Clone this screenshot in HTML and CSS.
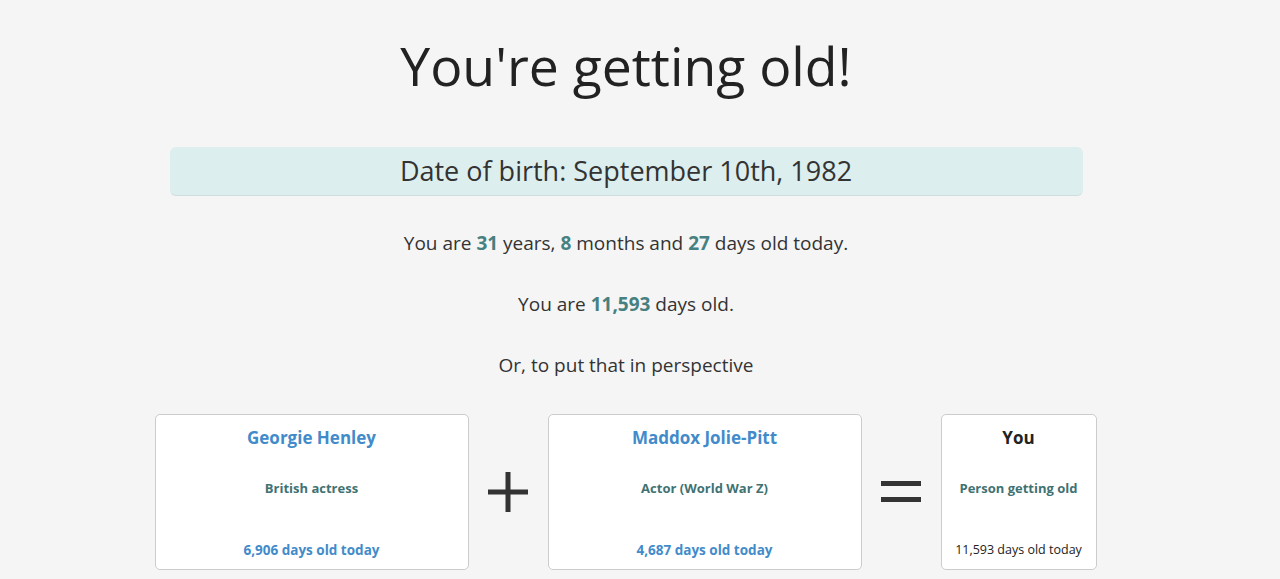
FILE: index.html
```html
<!DOCTYPE html>
<html>
<head>
<meta charset="utf-8">
<link rel="stylesheet" href="styles.css">
</head>
<body>
<div class="page">
  <h1 class="title">You're getting old!</h1>
  <div class="dob">Date of birth: September 10th, 1982</div>
  <p class="line">You are <b class="num">31</b> years, <b class="num">8</b> months and <b class="num">27</b> days old today.</p>
  <p class="line">You are <b class="num">11,593</b> days old.</p>
  <p class="line">Or, to put that in perspective</p>
  <div class="row">
    <div class="card wide">
      <div class="name">Georgie Henley</div>
      <div class="desc">British actress</div>
      <div class="age">6,906 days old today</div>
    </div>
    <div class="op">
      <svg width="40" height="40" viewBox="0 0 40 40"><rect x="0" y="17.5" width="40" height="5" fill="#333"/><rect x="17.5" y="0" width="5" height="40" fill="#333"/></svg>
    </div>
    <div class="card wide">
      <div class="name">Maddox Jolie-Pitt</div>
      <div class="desc">Actor (World War Z)</div>
      <div class="age">4,687 days old today</div>
    </div>
    <div class="op">
      <svg width="40" height="22" viewBox="0 0 40 22"><rect x="0" y="0" width="40" height="5" fill="#333"/><rect x="0" y="16" width="40" height="5" fill="#333"/></svg>
    </div>
    <div class="card narrow">
      <div class="name you">You</div>
      <div class="desc">Person getting old</div>
      <div class="age you-age">11,593 days old today</div>
    </div>
  </div>
</div>
</body>
</html>
```
FILE: styles.css
```css
html, body {
  margin: 0;
  padding: 0;
  background: #f5f5f5;
}
body {
  font-family: "Open Sans", "Noto Sans", sans-serif;
  color: #333;
}
.page {
  width: 1252px;
  display: flex;
  flex-direction: column;
  align-items: center;
}
.title {
  margin: 28px 0 0;
  font-size: 53.5px;
  font-weight: 400;
  line-height: 76px;
  color: #222;
}
.dob {
  margin-top: 43px;
  width: 913px;
  height: 49px;
  box-sizing: border-box;
  background: #ddeeee;
  border-radius: 6px;
  border-bottom: 1px solid #cfdede;
  font-size: 27px;
  line-height: 48px;
  text-align: center;
  color: #333;
}
.line {
  margin: 0;
  font-size: 19px;
  line-height: 28px;
  margin-top: 33px;
}
.num {
  color: #468080;
  font-weight: 700;
}
.row {
  display: flex;
  margin-top: 35px;
  margin-left: -1px;
}
.card {
  background: #fff;
  border: 1px solid #cccccc;
  border-radius: 5px;
  height: 156px;
  box-sizing: border-box;
  display: flex;
  flex-direction: column;
  align-items: center;
  text-align: center;
}
.wide { width: 314px; }
.narrow { width: 156px; }
.op {
  width: 79px;
  display: flex;
  align-items: center;
  justify-content: center;
  height: 156px;
}
.name {
  margin-top: 11px;
  font-size: 17px;
  line-height: 24px;
  font-weight: 700;
  color: #428bca;
}
.name.you { color: #222; }
.desc {
  margin-top: 28px;
  font-size: 13px;
  line-height: 20px;
  font-weight: 700;
  color: #3f7272;
}
.age {
  margin-top: auto;
  margin-bottom: 9px;
  font-size: 13.5px;
  line-height: 20px;
  font-weight: 700;
  color: #428bca;
}
.you-age {
  font-weight: 400;
  font-size: 12.5px;
  color: #222;
}
```
